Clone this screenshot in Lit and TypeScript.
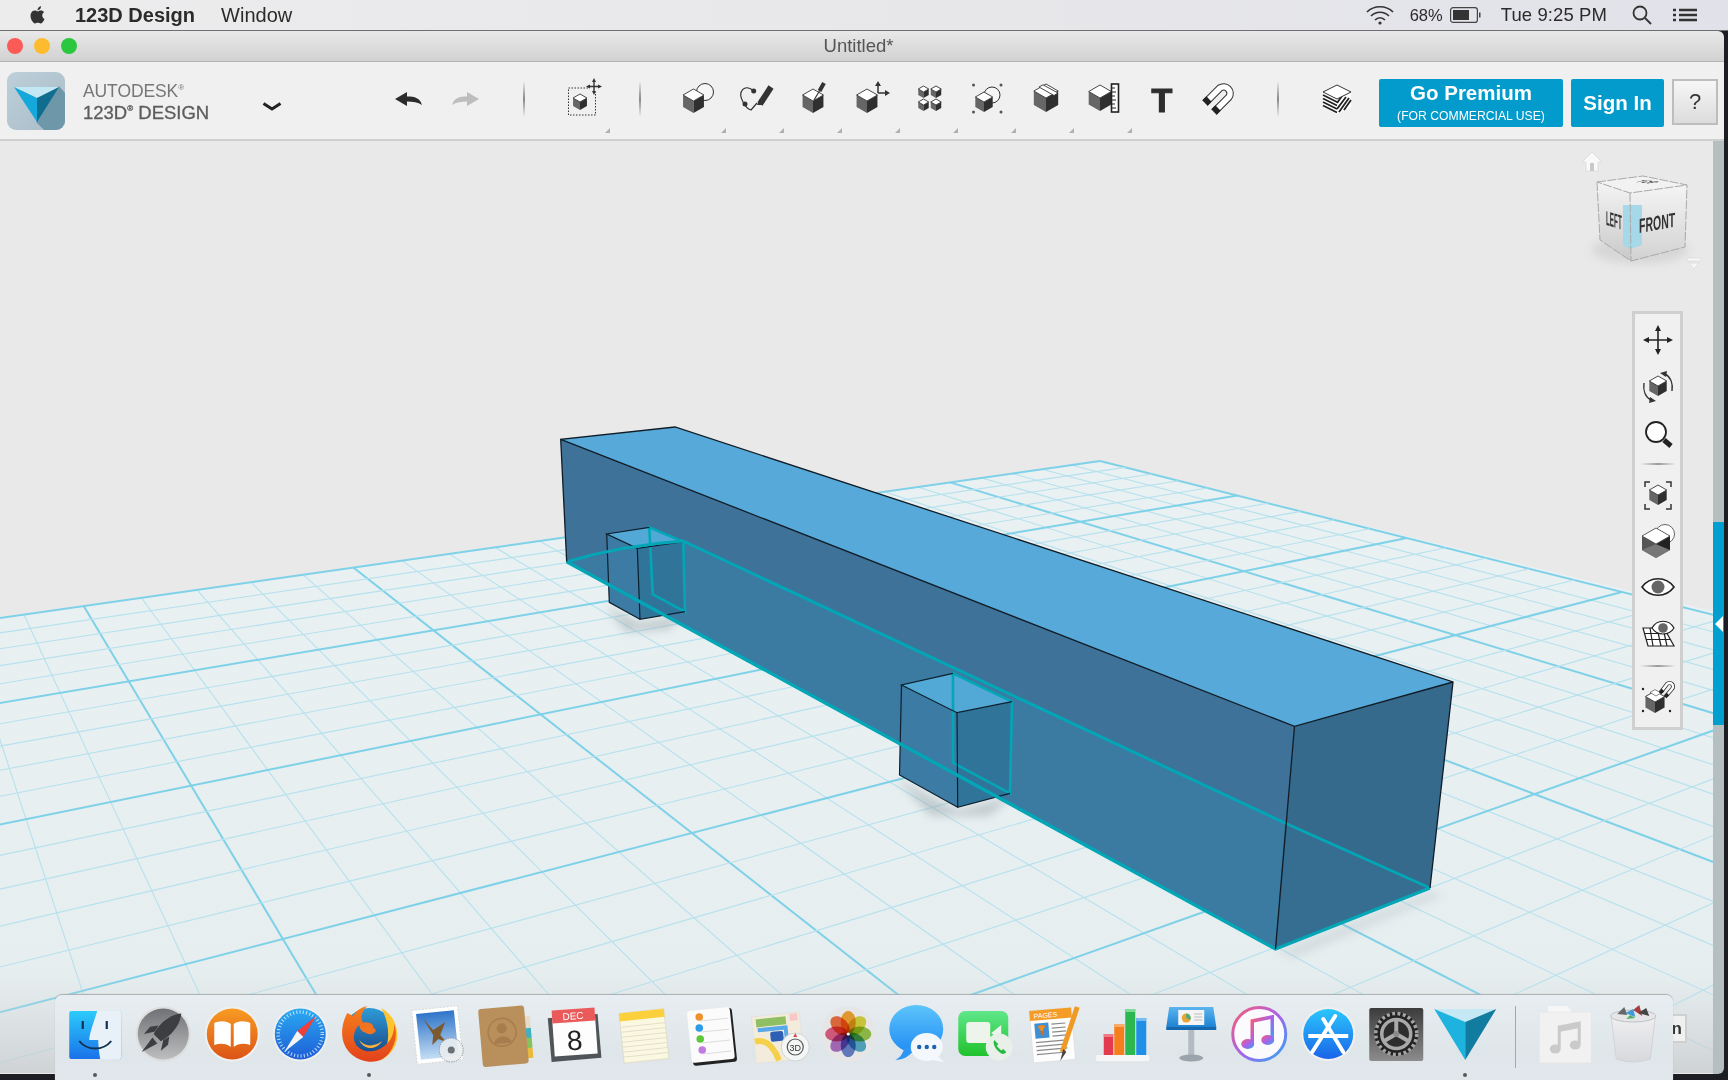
import { LitElement, html, css, svg } from 'lit';
import { customElement } from 'lit/decorators.js';

// isometric cube used all over the toolbars
const cube = (cx: number, cy: number, s: number) => {
  const w = s * 0.87;
  const h = s * 0.5;
  return svg`<g>
    <path d="M${cx - w} ${cy - h}L${cx} ${cy}V${cy + s}L${cx - w} ${cy + h}Z" fill="#666"/>
    <path d="M${cx + w} ${cy - h}L${cx} ${cy}V${cy + s}L${cx + w} ${cy + h}Z" fill="#2f2f2f"/>
    <path d="M${cx} ${cy - s}L${cx + w} ${cy - h}L${cx} ${cy}L${cx - w} ${cy - h}Z" fill="#fff" stroke="#333" stroke-width=".9"/>
  </g>`;
};

const toolIcons = [
  svg`<circle cx="27" cy="14" r="8.5" fill="#f6f6f6" stroke="#333" stroke-width="1"/>${cube(15.5, 23, 12)}`,
  svg`<path d="M17.7 13C9 5 1 13 7 24C9 28 12 31 15 32L21 25" fill="none" stroke="#333" stroke-width="1.2"/>
    <circle cx="17.7" cy="13" r="2.5" fill="#333"/><circle cx="9" cy="26" r="2.5" fill="#333"/>
    <path d="M35 9L24 26" stroke="#333" stroke-width="6"/><path d="M21 27L24 21L27 27Z" fill="#333"/>
    <path d="M34 10L31 15" stroke="#333" stroke-width="4"/>`,
  svg`${cube(19, 23, 12)}<path d="M30 5L25.5 13" stroke="#333" stroke-width="4"/><path d="M25.5 13L20 22" stroke="#333" stroke-width="1.2"/>`,
  svg`${cube(15, 23, 12)}<path d="M26 15V6M26 15H35" stroke="#333" stroke-width="1.5" fill="none"/>
    <path d="M26 3L23 8H29ZM38 15L33 12V18Z" fill="#333"/>`,
  svg`${cube(13.5, 14, 6)}${cube(26, 14, 6)}${cube(13.5, 27, 6)}${cube(26, 27, 6)}`,
  svg`<circle cx="24" cy="17" r="8" fill="#f6f6f6" stroke="#333" stroke-width="1"/>${cube(16, 24, 10)}
    <circle cx="5.5" cy="7" r="1.5" fill="#555"/><circle cx="33" cy="7" r="1.5" fill="#555"/>
    <circle cx="5.5" cy="34" r="1.5" fill="#555"/><circle cx="33" cy="34" r="1.5" fill="#555"/>`,
  svg`${cube(20, 20, 14)}<path d="M13 9L28 17.5L32 15L17 6.8Z" fill="#fff" stroke="#333" stroke-width=".9"/>`,
  svg`${cube(16, 20, 13)}<rect x="27.5" y="6" width="7" height="28" fill="#fff" stroke="#222" stroke-width="1.6"/>
    <path d="M28 10h3M28 14h4M28 18h3M28 22h4M28 26h3M28 30h4" stroke="#222" stroke-width="1"/>`,
];

const magnetIcon = svg`<path d="M5 25L20 10A6.5 6.5 0 0 1 29 19L14 34" fill="none" stroke="#333" stroke-width="7.5"/>
  <path d="M5 25L20 10A6.5 6.5 0 0 1 29 19L14 34" fill="none" stroke="#fff" stroke-width="5.5"/>
  <path d="M5 25L9 21M14 34L18 30" stroke="#222" stroke-width="7.5"/>`;

const layersIcon = svg`<path d="M15 16L1 9V24L15 31Z" fill="#fff"/><path d="M15 16L29 9V24L15 31Z" fill="#fff"/>
  <path d="M1 12L15 19M1 15.5L15 22.5M1 19L15 26M1 22.5L15 29.5" stroke="#222" stroke-width="1.8"/>
  <path d="M15 20L20 13M15 26L24 14M17 29L27 15M22 27L29 17" stroke="#222" stroke-width="1.8"/>
  <path d="M15 2L29 9L15 16L1 9Z" fill="#fff" stroke="#333" stroke-width="1"/>`;

const navIcons = {
  move: svg`<path d="M18 6V30M6 18H30" stroke="#222" stroke-width="1.6"/>
    <path d="M18 3L15 9H21ZM18 33L15 27H21ZM3 18L9 15V21ZM33 18L27 15V21Z" fill="#222"/>`,
  orbit: svg`${cube(18, 17, 10)}<path d="M25 5C31 8 33 15 32 22M11 31C5 28 3 21 4 14" fill="none" stroke="#333" stroke-width="1.4"/>
    <path d="M20 4L27 2L26 8ZM16 32L9 34L10 28Z" fill="#333"/>`,
  zoom: svg`<circle cx="16" cy="16" r="10" fill="#fff" stroke="#222" stroke-width="1.8"/>
    <path d="M24 24L31 30" stroke="#222" stroke-width="5"/>`,
  fit: svg`${cube(18, 18, 10)}<path d="M10 5H5V10M26 5H31V10M10 32H5V27M26 32H31V27" fill="none" stroke="#333" stroke-width="1.5"/>`,
  ghost: svg`<circle cx="25" cy="11" r="9.5" fill="#fff" stroke="#666" stroke-width="1"/>
    <path d="M16 5L30 13V27L16 35L2 27V13Z" fill="#555"/><path d="M16 21L30 27L16 35L2 27Z" fill="#777"/>
    <path d="M16 21V35M16 21L30 13V27Z" fill="#222"/><path d="M16 5L30 13L16 21L2 13Z" fill="#fff" stroke="#444" stroke-width=".8"/>`,
  eye: svg`<path d="M2 18C10 7 26 7 34 18C26 29 10 29 2 18Z" fill="#fff" stroke="#222" stroke-width="1.6"/><circle cx="18" cy="18" r="6.5" fill="#666"/>`,
  gridEye: svg`<path d="M3 13H24L34 31H8Z" fill="#fff" stroke="#222" stroke-width="1.2"/>
    <path d="M4.5 18.5H27M6 24.5H30M10 13L13 31M17 13L21 31M23 13L27 31" stroke="#222" stroke-width="1.2"/>
    <path d="M12 13C17 4 29 4 34 13C29 21 17 21 12 13Z" fill="#fff" stroke="#222" stroke-width="1.2"/><circle cx="23" cy="13" r="4.8" fill="#666"/>`,
  snap: svg`${cube(15, 24, 11)}<path d="M10 14.5L16 18L21 15L15 11.6Z" fill="#fff" stroke="#333" stroke-width=".6"/>
    <path d="M21 14L27 6A3.5 3.5 0 0 1 32 11L26 18" fill="none" stroke="#333" stroke-width="4"/>
    <path d="M21 14L27 6A3.5 3.5 0 0 1 32 11L26 18" fill="none" stroke="#fff" stroke-width="2.4"/>
    <path d="M20 15L23 12M25 19L28 16" stroke="#222" stroke-width="3.6"/>
    <circle cx="3" cy="11" r="1.2" fill="#222"/><circle cx="3" cy="33" r="1.2" fill="#222"/><circle cx="30" cy="33" r="1.2" fill="#222"/>`,
};

const LOGO = {
  top: '#c4e8f3',
  left: '#15a8da',
  right: '#0f6e90',
};

// floor plane of the viewport: u runs along the back edge, v towards the camera
const project = (u: number, v: number) => {
  const w = -0.30772 * u - 0.28683 * v + 1;
  return [(-1042.06 * u + 56.76 * v + 1100) / w, (-41.48 * u - 38.8 * v + 461) / w];
};

const gridLines = () => {
  const lines: { a: number[]; b: number[]; major: boolean }[] = [];
  for (let i = 0; i <= 35; i++) {
    const u = i / 25;
    lines.push({ a: project(u, 0), b: project(u, (0.85 - 0.30772 * u) / 0.28683), major: i % 5 === 0 });
  }
  for (let j = 0; j <= 25; j++) {
    const v = j / 15;
    lines.push({ a: project(0, v), b: project((0.85 - 0.28683 * v) / 0.30772, v), major: j % 5 === 0 });
  }
  return lines;
};

const pts = (p: number[][]) => p.map((q) => q.join(',')).join(' ');

// one small block pushed into the long box
const block = (c: Record<string, number[]>) => svg`
  <polygon points=${pts([c.tl, c.tf, c.bf, c.bl])} fill="#3c7ba3"/>
  <polygon points=${pts([c.tf, c.tr, c.br, c.bf])} fill="#31749a"/>
  <polygon points=${pts([c.tl, c.tb, c.tr, c.tf])} fill="#52a9d6"/>
  <polyline points=${pts([c.tr, c.tb, c.hb, c.br, c.tr])} fill="none" stroke="#03a6b6" stroke-width="2.6"/>
  <polyline points=${pts([c.tb, c.tl, c.tf, c.tr])} fill="none" stroke="#0e1f2c" stroke-width="1.2"/>
  <polyline points=${pts([c.tf, c.bf, c.br])} fill="none" stroke="#0e1f2c" stroke-width="1.2"/>
  <polyline points=${pts([c.tl, c.bl, c.bf])} fill="none" stroke="#0e1f2c" stroke-width="1.2"/>
`;

@customElement('view-scene')
export class ViewScene extends LitElement {
  static styles = css`
    :host { display: block; }
    svg { display: block; }
    text { font-family: "Liberation Sans", Arial, sans-serif; font-weight: 700; fill: #333; }
  `;

  render() {
    return html`<svg width="1713" height="932" viewBox="0 141 1713 932">
      <defs>
        <linearGradient id="floor" x1="0" y1="0" x2="0" y2="1">
          <stop offset="0" stop-color="#e9f1f3"/><stop offset=".8" stop-color="#e6eef0"/><stop offset="1" stop-color="#e2e9eb"/>
        </linearGradient>
        <linearGradient id="fade" x1="0" y1="0" x2="0" y2="1">
          <stop offset="0" stop-color="#d3d6d8" stop-opacity="0"/><stop offset="1" stop-color="#c8cbcd" stop-opacity=".75"/>
        </linearGradient>
        <linearGradient id="vcL" x1="0" y1="0" x2="0" y2="1"><stop offset="0" stop-color="#f4f4f4"/><stop offset="1" stop-color="#c9c9c9"/></linearGradient>
        <linearGradient id="vcR" x1="0" y1="0" x2="0" y2="1"><stop offset="0" stop-color="#f4f4f4"/><stop offset="1" stop-color="#d2d2d2"/></linearGradient>
        <filter id="soft" x="-30%" y="-80%" width="160%" height="260%"><feGaussianBlur stdDeviation="4"/></filter>
      </defs>
      <rect x="0" y="141" width="1713" height="932" fill="#e9e9e9"/>
      <polygon points="1100,461 0,617 0,1073 1713,1073 1713,611" fill="url(#floor)"/>
      ${gridLines().map((l) => svg`<line x1=${l.a[0]} y1=${l.a[1]} x2=${l.b[0]} y2=${l.b[1]}
        stroke=${l.major ? '#7fd1e8' : '#b6e1ed'} stroke-width=${l.major ? 2 : 1.1}/>`)}
      <rect x="0" y="975" width="1713" height="98" fill="url(#fade)"/>

      <polygon points="606,606 640,622 688,614 668,630 625,632" fill="#8a9498" opacity=".38" filter="url(#soft)"/>
      <polygon points="896,778 958,810 1012,796 990,816 930,816" fill="#8a9498" opacity=".38" filter="url(#soft)"/>
      <polygon points="1275,952 1432,890 1442,896 1295,958" fill="#a0aaae" opacity=".25" filter="url(#soft)"/>

      <polygon points="675,427 1453,682 1294.5,726.4 560.7,439.3" fill="#56a9d8"/>
      <polygon points="560.7,439.3 1294.5,726.4 1275.5,949 566.7,561.7" fill="#3e7299"/>
      <polygon points="566.7,561.7 683,541 1285,823 1275.5,949" fill="#3b7ba2"/>
      <polygon points="1294.5,726.4 1453,682 1430,888 1275.5,949" fill="#356a8c"/>
      <polygon points="1285,823 1430,888 1275.5,949" fill="#356e91"/>

      ${block({ tl: [606.7, 534], tb: [649.3, 527.3], tr: [683.3, 541.7], tf: [637.3, 548.3], bl: [609.3, 602.3], bf: [640, 619.3], br: [685, 611.7], hb: [652.7, 594.3] })}
      ${block({ tl: [901.5, 685], tb: [953, 673.3], tr: [1012, 701.7], tf: [957, 712.7], bl: [899.5, 775], bf: [957.7, 807.3], br: [1010, 793.3], hb: [953, 762.7] })}

      <path d="M566.7 561.7Q625 545 683 541L1285 823L1430 888" fill="none" stroke="#03a6b6" stroke-width="3"/>
      <path d="M566.7 561.7L1275.5 949L1430 888" fill="none" stroke="#03a6b6" stroke-width="3.4"/>
      <polyline points="566.7,561.7 560.7,439.3 675,427 1453,682 1430,888" fill="none" stroke="#101c26" stroke-width="1.3"/>
      <polyline points="560.7,439.3 1294.5,726.4 1453,682" fill="none" stroke="#101c26" stroke-width="1.3"/>
      <line x1="1294.5" y1="726.4" x2="1275.5" y2="949" stroke="#101c26" stroke-width="1.3"/>

      <!-- view cube -->
      <ellipse cx="1640" cy="250" rx="48" ry="14" fill="#c4c4c4" opacity=".5" filter="url(#soft)"/>
      <path d="M1582 162L1592 152L1602 162H1598V171H1586V162Z" fill="#f9f9f9" stroke="#dedede" stroke-width="1"/>
      <rect x="1590" y="163" width="4" height="8" fill="#c9c9c9"/>
      <polygon points="1597,182 1600,240 1631,261 1630,193" fill="url(#vcL)"/>
      <polygon points="1630,193 1631,261 1685,247 1687,185" fill="url(#vcR)"/>
      <polygon points="1597,182 1643,176 1687,185 1630,193" fill="#f2f2f2"/>
      <polygon points="1623,205 1642,205 1642,245 1630,249 1623,245" fill="#a5d8e8"/>
      <path d="M1597 182L1643 176L1687 185L1630 193ZM1630 193L1631 261M1597 182L1600 240L1631 261L1685 247L1687 185"
        fill="none" stroke="#a9a9a9" stroke-width="1" stroke-dasharray="9 1.5"/>
      <text transform="matrix(.45,.13,0,1.45,1606,225)" font-size="14">LEFT</text>
      <text transform="matrix(.75,-.13,0,1.45,1639,233)" font-size="14">FRONT</text>
      <text transform="matrix(.62,.06,-.9,.22,1634,182)" font-size="14">TOP</text>
      <path d="M1687 258H1701V261H1687ZM1689 263H1699L1694 269Z" fill="#f7f7f7" stroke="#dcdcdc" stroke-width=".8"/>
    </svg>`;
  }
}

@customElement('nav-panel')
export class NavPanel extends LitElement {
  static styles = css`
    :host { display: flex; flex-direction: column; align-items: center; width: 45px; height: 411px;
      padding-top: 2px; background: #f0f0f0; border: 3px solid #cfcfcf; }
    .item { width: 36px; height: 46px; display: flex; align-items: center; justify-content: center; flex: none; }
    .item.tall { height: 47px; }
    .sep { width: 36px; height: 2px; flex: none; margin: 6px 0 7px;
      background: linear-gradient(90deg, transparent, #999 50%, transparent); }
    .sep.low { margin: 9px 0 6px; }
    svg { display: block; }
  `;

  private icon(body: unknown, cls = '') {
    return html`<div class="item ${cls}"><svg width="36" height="36" viewBox="0 0 36 36">${body}</svg></div>`;
  }

  render() {
    return html`
      ${this.icon(navIcons.move, 'tall')}${this.icon(navIcons.orbit, 'tall')}${this.icon(navIcons.zoom, 'tall')}
      <div class="sep"></div>
      ${this.icon(navIcons.fit)}${this.icon(navIcons.ghost)}${this.icon(navIcons.eye)}${this.icon(navIcons.gridEye)}
      <div class="sep low"></div>
      ${this.icon(navIcons.snap)}
    `;
  }
}

const grad = (id: string, a: string, b: string) => svg`<defs><linearGradient id=${id} x1="0" y1="0" x2="0" y2="1">
  <stop offset="0" stop-color=${a}/><stop offset="1" stop-color=${b}/></linearGradient></defs>`;

const gearSpokes = [0, 120, 240];
const petals = [
  '#f6a01e', '#d8d32a', '#8fc33a', '#46a7c8', '#5a78c8', '#a863c0', '#e0507a', '#f0622c',
];

// dock icons, drawn around the centre of a 68.5x68 cell
const dockIcons = [
  svg`${grad('fd', '#2ccbfb', '#1a72ea')}<rect x="-26" y="-23" width="52" height="48" rx="2" fill="url(#fd)"/>
    <path d="M2 -23C-2 -10 -6 0 -6 6H3C3 12 4 20 5 25H24A2 2 0 0 0 26 23V-21A2 2 0 0 0 24 -23Z" fill="#e8f1f8"/>
    <path d="M-12.5 -13V-5M11.5 -13V-5" stroke="#14324f" stroke-width="2.2"/>
    <path d="M-16 7C-8 17 8 17 16 7" fill="none" stroke="#14324f" stroke-width="2"/>`,
  svg`${grad('lp', '#6f7174', '#bcbec0')}<circle r="27.5" fill="#dedede"/><circle r="25.5" fill="url(#lp)"/>
    <g transform="scale(1.2)"><path d="M15 -17C5 -16 -3 -9 -8 0L-2 6C7 1 14 -7 15 -17Z" fill="#3c3e41"/>
    <path d="M-7 -2L-16 0L-11 -6L-4 -7ZM0 5L-2 14L4 9L5 2Z" fill="#3c3e41"/>
    <path d="M-9 3L-18 15L-5 8Z" fill="#3c3e41"/></g>`,
  svg`${grad('ib', '#f79c22', '#dc5317')}<circle r="27.5" fill="#f0f0f0"/><circle r="25.5" fill="url(#ib)"/>
    <path d="M-1.5 -10C-6 -14 -14 -13 -18 -11V11C-12 9 -6 9 -1.5 13Z M1.5 -10C6 -14 14 -13 18 -11V11C12 9 6 9 1.5 13Z" fill="#fff"/>`,
  svg`${grad('sf', '#2aaaf2', '#1d5dd6')}<circle r="27.5" fill="#efefef"/><circle r="25.5" fill="url(#sf)"/>
    <circle r="22" fill="none" stroke="#dff0ff" stroke-width="3.5" stroke-dasharray="1 2.3" opacity=".85"/>
    <polygon points="16,-18 -3,-3 3,3" fill="#ef3f3c"/><polygon points="-16,18 -3,-3 3,3" fill="#f4f4f4"/>`,
  svg`${grad('ffb', '#2f9bd6', '#163f80')}${grad('ffo', '#f7811c', '#e2421b')}<circle cy="0" r="26" fill="url(#ffb)"/>
    <path d="M12 -26C24 -20 31 -4 27 9C24 18 17 24 10 27C21 14 22 -8 12 -26Z" fill="#fcc42e"/>
    <path d="M-22 -21C-30 -6 -29 11 -17 21C-4 31 15 31 23 14C28 4 27 -4 25 -10C25 2 20 11 8 16C-6 21 -18 11 -15 0C-14 -6 -11 -9 -6 -11C-10 -18 -6 -24 -2 -28C-10 -26 -14 -22 -16 -18C-18 -19 -20 -20 -22 -21Z" fill="url(#ffo)"/>
    <path d="M-10 -10C-2 -14 5 -10 4 -6C8 -5 7 -1 2 0C-2 1 -4 -2 -6 -2C-9 -4 -10 -7 -10 -10Z" fill="#f37420"/>
    <path d="M-10 6C-5 13 5 13 13 7C7 17 -6 16 -10 6Z" fill="#fbb040"/>`,
  svg`${grad('ml', '#2f74c9', '#c4def4')}<g transform="rotate(-6)">
      <rect x="-23" y="-26" width="46" height="54" fill="#fff" stroke="#d8d8d8" stroke-dasharray="2 1.5"/>
      <rect x="-19" y="-22" width="38" height="46" fill="url(#ml)"/></g>
    <path d="M-14 -15L-4 -4L8 -12L3 1L9 8L1 5L-5 11L-4 1Z" fill="#7b5a2e"/>
    <circle cx="14" cy="16" r="12" fill="#e9edf0" opacity=".9" stroke="#8b8f94" stroke-dasharray="1.5 1"/>
    <circle cx="14" cy="16" r="3.5" fill="#6c7075"/>`,
  svg`<g transform="rotate(-5)"><rect x="18" y="-16" width="7" height="12" fill="#e4dcc8"/><rect x="18" y="-4" width="7" height="10" fill="#3fb1c0"/>
      <rect x="18" y="6" width="7" height="10" fill="#84c35a"/><rect x="18" y="16" width="7" height="10" fill="#e9b93e"/>
      <rect x="-26" y="-27" width="46" height="58" rx="3" fill="#b98f5c"/>
      <circle cx="-4" cy="-2" r="14" fill="none" stroke="#a67d4c" stroke-width="1.5"/>
      <circle cx="-4" cy="-6" r="5" fill="#a67d4c"/><path d="M-13 9C-11 0 3 0 5 9Z" fill="#a67d4c"/></g>`,
  svg`<g transform="rotate(-5)"><rect x="-25" y="-18" width="50" height="44" fill="#4e5458"/></g>
    <g transform="rotate(-4)"><rect x="-21" y="-25" width="43" height="46" fill="#fdfdfd"/>
      <path d="M-21 -25H22V-12H-21Z" fill="#ea5a5a"/>
      <text x="0" y="-14.5" text-anchor="middle" font-size="10" fill="#fff" class="cal">DEC</text>
      <text x="0" y="16" text-anchor="middle" font-size="28" fill="#222" class="cal">8</text></g>`,
  svg`<g transform="rotate(-6)"><rect x="-22" y="-23" width="45" height="50" fill="#fbf8e2" stroke="#d9d4b8" stroke-width=".6"/>
      <path d="M-22 -23H23V-15H-22Z" fill="#fbd03c"/>
      <path d="M-22 -9H23M-22 -4H23M-22 1H23M-22 6H23M-22 11H23M-22 16H23M-22 21H23" stroke="#ddd9c4" stroke-width=".8"/></g>`,
  svg`<g transform="rotate(-6)"><rect x="-21" y="-24" width="44" height="54" rx="3" fill="#222"/><rect x="-22" y="-25" width="43" height="52" rx="3" fill="#fbfbfb"/>
      <path d="M-10 -14H18M-10 -3H18M-10 8H18M-10 19H18" stroke="#dcdcdc"/></g>
    <circle cx="-12" cy="-17" r="3.8" fill="#f0902a"/><circle cx="-12" cy="-6" r="3.8" fill="#2c9de8"/>
    <circle cx="-11" cy="5" r="3.8" fill="#5dc83b"/><circle cx="-9" cy="16" r="3.8" fill="#c27ae0"/>`,
  svg`<g transform="rotate(-6)"><rect x="-27" y="-20" width="48" height="47" fill="#f3ecdc" stroke="#ddd" stroke-width=".6"/>
      <rect x="-23" y="-17" width="30" height="8" fill="#8fbf63"/><rect x="11" y="-19" width="8" height="7" fill="#f8c8c8"/>
      <path d="M-22 -6H6V20" fill="none" stroke="#58a7e6" stroke-width="4"/>
      <path d="M-26 5C-14 3 -8 12 -4 26" fill="none" stroke="#f4d148" stroke-width="6"/>
      <rect x="-10" y="-3" width="13" height="10" rx="2" fill="#2d5fb4"/></g>
    <circle cx="15" cy="13" r="14" fill="#f4f6f6" stroke="#c8cccc" stroke-width=".8"/>
    <circle cx="15" cy="13" r="8" fill="none" stroke="#555" stroke-width="1.2"/>
    <text x="15" y="16.5" text-anchor="middle" font-size="9" fill="#333" class="cal">3D</text>
    <path d="M15 -1L13 3H17Z" fill="#d44"/>`,
  svg`<circle r="27.5" fill="#e6e6e6"/>
    ${petals.map((c, i) => svg`<ellipse cx="0" cy="-11.5" rx="7.5" ry="11.5" fill=${c} class="petal" transform="rotate(${i * 45})"/>`)}
    <circle r="1.6" fill="#fff"/>`,
  svg`${grad('ms', '#5ec4fb', '#1f8cf4')}<ellipse cx="-1" cy="-5" rx="27" ry="24" fill="url(#ms)"/>
    <path d="M-12 10C-13 18 -17 24 -22 26C-14 26 -8 22 -4 17Z" fill="#2d96f5"/>
    <ellipse cx="9.5" cy="13" rx="16" ry="14" fill="#f4f8fc"/><path d="M20 22L27 28L15 26Z" fill="#f4f8fc"/>
    <circle cx="2" cy="13" r="2.2" fill="#1d63b0"/><circle cx="9.5" cy="13" r="2.2" fill="#1d63b0"/><circle cx="17" cy="13" r="2.2" fill="#1d63b0"/>`,
  svg`${grad('ft', '#5fe78a', '#20c22d')}<rect x="-27" y="-23" width="50" height="45" rx="7" fill="url(#ft)"/>
    <rect x="-19" y="-12" width="24" height="21" rx="3" fill="#ecf4ec"/><path d="M6 -1L16 -9V7Z" fill="#ecf4ec"/>
    <circle cx="14" cy="13" r="13.5" fill="#e9f0ea"/>
    <path d="M9 6C7 9 10 15 14 18C17 21 20 20 21 18L18 15L16 16.5L11.5 12L13 10Z" fill="#27bb40"/>`,
  svg`<g transform="rotate(-5)"><rect x="-23" y="-25" width="42" height="52" fill="#fdfdfd" stroke="#d8d8d8" stroke-width=".6"/>
      <rect x="-23" y="-25" width="42" height="10" fill="#f49b28"/>
      <text x="-19" y="-17" font-size="7" fill="#fff" class="cal">PAGES</text>
      <rect x="-19" y="-12" width="14" height="15" fill="#3f8fd2"/><path d="M-16 -9L-12 -3L-8 -9L-12 -10Z" fill="#f28a1c"/><path d="M-14 -4L-12 1L-10 -4Z" fill="#d96b12"/>
      <path d="M-2 -10H12M-2 -6H12M-2 -2H12M-2 2H12M-19 7H12M-19 11H12M-19 15H12M-19 19H8" stroke="#8a8a8a" stroke-width="1.2"/></g>
    <path d="M23 -27L8 18" stroke="#ef9a24" stroke-width="5"/><path d="M9 15L6 27L12 18Z" fill="#444"/>`,
  svg`<path d="M-26 21H27V27H-26Z" fill="#f6f6f6"/>
    <rect x="-18.5" y="0" width="9.5" height="21" fill="#e33a4f"/><rect x="-18.5" y="0" width="9.5" height="3" fill="#ee7c86"/>
    <rect x="-8" y="-10" width="10" height="31" fill="#f57f1d"/><rect x="-8" y="-10" width="10" height="3" fill="#f9ac6a"/>
    <rect x="3" y="-25" width="10" height="46" fill="#2cb84f"/><rect x="3" y="-25" width="10" height="3" fill="#7bdc92"/>
    <rect x="14" y="-16" width="10" height="37" fill="#1f8fe8"/><rect x="14" y="-16" width="10" height="3" fill="#78bdf2"/>`,
  svg`${grad('kn', '#5ab4ef', '#1f82d2')}<path d="M-22 -27H22L25 -7H-25Z" fill="url(#kn)"/><rect x="-25" y="-7" width="50" height="3" fill="#1668ae"/>
    <rect x="-13" y="-24" width="26" height="15" fill="#f4f4f4"/><circle cx="-5" cy="-16" r="4.5" fill="#e9a33a"/><path d="M-5 -16V-20.5A4.5 4.5 0 0 1 -1 -14Z" fill="#41b07a"/>
    <path d="M3 -20H11M3 -17H11M3 -14H11" stroke="#bbb"/>
    <path d="M-3 -4H3V23H-3Z" fill="#b3bcc2"/><ellipse cx="0" cy="24" rx="12" ry="3.5" fill="#9aa4aa"/>`,
  svg`<defs><linearGradient id="it" x1="0" y1="0" x2="1" y2="1"><stop offset="0" stop-color="#fb5c74"/><stop offset=".5" stop-color="#a862ea"/><stop offset="1" stop-color="#2fa9f2"/></linearGradient></defs>
    <circle r="26.5" fill="#fbfbfd" stroke="url(#it)" stroke-width="3"/>
    <path d="M-7 9V-13L13 -17V5" fill="none" stroke="url(#it)" stroke-width="3.5"/>
    <ellipse cx="-11.5" cy="10" rx="6.5" ry="5" fill="url(#it)"/><ellipse cx="8.5" cy="6" rx="6.5" ry="5" fill="url(#it)"/>`,
  svg`${grad('as', '#2ac6fd', '#1a64e8')}<circle r="27" fill="#f0f0f0"/><circle r="25" fill="url(#as)"/>
    <path d="M-20 2H20" stroke="#fff" stroke-width="4"/>
    <path d="M-16 18L7 -18" stroke="#fff" stroke-width="4" stroke-linecap="round"/>
    <path d="M-5 -15L15 18" stroke="#fff" stroke-width="4" stroke-linecap="round"/>`,
  svg`${grad('sp', '#3c3c3c', '#8c8c8c')}<rect x="-27" y="-26" width="54" height="53" rx="2" fill="url(#sp)"/>
    <circle r="22" fill="#232323"/><circle r="20.5" fill="none" stroke="#a5a5a5" stroke-width="3.5" stroke-dasharray="3 2.4"/>
    <circle r="14.5" fill="#2d2d2d" stroke="#a8a8a8" stroke-width="3.5"/>
    ${gearSpokes.map((a) => svg`<path d="M0 0V-14" stroke="#aaa" stroke-width="4" transform="rotate(${a})"/>`)}
    <circle r="3" fill="#8a8a8a"/>`,
  svg`<polygon points="-31,-25 31,-25 0,-12" fill="#c5e9f4"/><polygon points="-31,-25 0,-12 0,26" fill="#1eb2de"/>
    <polygon points="31,-25 0,-12 0,26" fill="#117c9f"/>`,
  svg`<path d="M-17 -28H2L7 -22H-17Z" fill="#f6f6f6"/><rect x="-26" y="-22" width="52" height="51" fill="#f1f1f1" stroke="#e4e4e4" stroke-width=".6"/>
    <path d="M-6 14V-7L14 -11V10" fill="none" stroke="#cacaca" stroke-width="3"/><path d="M-6 -7L14 -11V-6L-6 -2Z" fill="#cacaca"/>
    <ellipse cx="-10" cy="15" rx="5.5" ry="4.5" fill="#cacaca"/><ellipse cx="10" cy="11" rx="5.5" ry="4.5" fill="#cacaca"/>`,
  svg`${grad('tr', '#eeeef0', '#d8d9dd')}<path d="M-22 -17L-17 25Q0 31 17 25L22 -17Z" fill="url(#tr)" stroke="#ccced2" stroke-width=".8"/>
    <ellipse cx="0" cy="-18" rx="22.5" ry="6" fill="#e6e6e8" stroke="#bfc1c5"/>
    <path d="M-16 -20L-9 -27L-6 -19Z" fill="#666"/><path d="M-8 -21L0 -25L2 -17Z" fill="#3f9bd8"/><path d="M0 -24L6 -29L9 -18Z" fill="#a53f3f"/>
    <path d="M5 -21L13 -26L16 -18Z" fill="#444"/><path d="M-3 -19L2 -16L-7 -15Z" fill="#52b060"/>`,
];

const DOCK_RUNNING = [0, 4, 20];

@customElement('mac-dock')
export class MacDock extends LitElement {
  static styles = css`
    :host { display: flex; padding: 5px 0 0 5.75px; box-sizing: border-box; border-radius: 7px 7px 0 0;
      background: linear-gradient(180deg, #e7edf0, #dfe6ea 70%, #e2e7ec); box-shadow: 0 -1px 1px #a9adaf; }
    .cell { position: relative; width: 68.5px; height: 68px; flex: none; }
    .cell svg { display: block; overflow: visible; }
    .dot { position: absolute; left: 32.25px; top: 73px; width: 4px; height: 4px; border-radius: 50%; background: #55595c; }
    .sep { flex: none; width: 1px; height: 62px; margin: 6px 14.75px 0 15.75px; background: #a3a8ab; }
    .cal { font-family: "Liberation Sans", Arial, sans-serif; }
    .petal { mix-blend-mode: multiply; opacity: .9; }
  `;

  private cell(body: unknown, running: boolean) {
    return html`<div class="cell"><svg width="68.5" height="68" viewBox="-34.25 -34 68.5 68">${body}</svg>
      ${running ? html`<div class="dot"></div>` : ''}</div>`;
  }

  render() {
    return html`
      ${dockIcons.slice(0, 21).map((b, i) => this.cell(b, DOCK_RUNNING.includes(i)))}
      <div class="sep"></div>
      ${dockIcons.slice(21).map((b) => this.cell(b, false))}
    `;
  }
}

@customElement('app-root')
export class AppRoot extends LitElement {
  static styles = css`
    :host { display: block; position: relative; width: 1728px; height: 1080px; overflow: hidden;
      background: #1d1e23; font-family: "Liberation Sans", Arial, sans-serif; }

    .menubar { height: 30px; display: flex; align-items: center; color: #2b2b2b; font-size: 18px;
      background: linear-gradient(90deg, #ececed, #e7e7ea 60%, #e1e2e9); border-bottom: 1px solid #6e6e72; }
    .apple { margin-left: 28px; width: 20px; height: 22px; }
    .app-name { margin-left: 27px; font-weight: 700; font-size: 20px; }
    .menu-item { margin-left: 26px; font-size: 20px; }
    .status { margin-left: auto; display: flex; align-items: center; padding-right: 31px; font-size: 17px; }
    .wifi { width: 28px; height: 20px; margin-right: 16px; }
    .pct { font-size: 16.5px; margin-right: 7px; }
    .batt { width: 31px; height: 16px; margin-right: 20px; }
    .clock { font-size: 18.5px; margin-right: 25px; letter-spacing: .1px; }
    .mag { width: 20px; height: 20px; margin-right: 21px; }
    .list { width: 24px; height: 14px; }

    .window { width: 1724px; height: 1043px; display: flex; flex-direction: column;
      border-radius: 0 6px 6px 0; overflow: hidden; }
    .titlebar { height: 30px; flex: none; display: flex; align-items: center; position: relative;
      background: linear-gradient(180deg, #e9e9e9, #d1d1d1); }
    .lights { display: flex; gap: 11px; margin-left: 7px; }
    .light { width: 16px; height: 16px; border-radius: 50%; }
    .red { background: #fc5a56; }
    .yellow { background: #fdbb30; }
    .green { background: #2bc83f; }
    .title { position: absolute; left: 0; right: 7px; text-align: center; font-size: 18.5px; color: #555; }

    .toolbar { height: 80px; flex: none; box-sizing: border-box; display: flex; align-items: center;
      padding-left: 7px; background: #f0f0f0; border-top: 1px solid #b5b5b5; border-bottom: 2px solid #cfcfcf; }
    .logo { width: 58px; height: 58px; flex: none; display: block; }
    .brand { width: 130px; margin-left: 18px; margin-top: 4px; flex: none; color: #666; line-height: 1; }
    .brand-top { font-size: 17.5px; font-weight: 400; color: #777; margin-bottom: 4px; letter-spacing: -.1px; }
    .brand-bottom { font-size: 18.5px; color: #5c5c5c; white-space: nowrap; -webkit-text-stroke: .3px #5c5c5c; }
    .brand sup { font-size: 8px; vertical-align: top; line-height: 1.2; }
    .chev { width: 20px; height: 10px; margin-left: 49px; margin-top: 12px; flex: none; }
    .arrow { width: 27px; height: 14px; flex: none; margin-top: -3px; }
    .undo { margin-left: 113px; }
    .redo { margin-left: 30px; }
    .divider { width: 2px; height: 36px; flex: none; margin-top: -3px;
      background: linear-gradient(180deg, transparent, #888 50%, transparent); }
    .d1 { margin-left: 44px; }
    .tools { display: flex; flex: none; margin-left: 28px; }
    .select { margin-left: 28px; }
    .tool { position: relative; width: 58px; height: 77px; flex: none; display: flex; align-items: center;
      justify-content: center; padding-bottom: 5px; box-sizing: border-box; }
    .tool svg { display: block; }
    .tool.more::after { content: ""; position: absolute; right: 1px; bottom: 6px; width: 0; height: 0;
      border-left: 5px solid transparent; border-bottom: 5px solid #b0b0b0; }
    .tool-t { font-size: 34px; font-weight: 700; color: #2e2e2e; line-height: 1; margin-top: 3px;
      -webkit-text-stroke: 1.2px #2e2e2e; }
    .layers { width: 30px; height: 32px; margin-left: 43px; flex: none; margin-top: -3px; }
    .d3 { margin-left: 28px; }
    .btn { height: 48px; background: #029bcb; color: #fff; border-radius: 2px; flex: none; margin-top: 4px;
      display: flex; flex-direction: column; align-items: center; justify-content: center; font-weight: 700; }
    .premium { width: 184px; margin-left: 27px; font-size: 20.5px; line-height: 1; }
    .premium small { font-size: 12.2px; font-weight: 400; margin-top: 6px; }
    .signin { width: 93px; margin-left: 8px; font-size: 20.5px; }
    .help { width: 46px; height: 46px; margin-left: 8px; box-sizing: border-box; flex: none; margin-top: 2px;
      border: 2px solid #bdbdbd; background: linear-gradient(180deg, #f6f6f6, #dcdcdc);
      display: flex; align-items: center; justify-content: center; font-size: 22px; color: #333; }

    .viewport { flex: 1; display: flex; min-height: 0; }
    .canvas { position: relative; width: 1713px; overflow: hidden; background: #e9e9e9; }
    .panel-tab { width: 11px; display: flex; flex-direction: column; background: #b5bfbf; }
    .tab-blue { margin-top: 381px; height: 203px; background: #009fcf; display: flex; align-items: center; }
    .tab-arrow { width: 0; height: 0; margin-left: 2px; border-top: 8px solid transparent;
      border-bottom: 8px solid transparent; border-right: 8px solid #fff; }

    nav-panel { position: absolute; left: 1632px; top: 170px; }
    .peek { position: absolute; left: 1650px; top: 873px; width: 37px; height: 29px; box-sizing: border-box;
      border: 2px solid #cfcfcf; background: #f0f0f0; font-size: 17px; font-weight: 700; color: #333;
      text-align: right; padding-right: 3px; line-height: 25px; }
    mac-dock { position: absolute; left: 55px; top: 995px; width: 1618px; height: 85px; }
  `;

  render() {
    return html`
      <div class="menubar">
        <svg class="apple" viewBox="0 0 24 24"><path fill="#333" d="M17.05 12.54c-.03-2.6 2.12-3.85 2.22-3.91-1.21-1.77-3.09-2.01-3.76-2.04-1.6-.16-3.12.94-3.93.94-.81 0-2.06-.92-3.39-.89-1.74.03-3.35 1.01-4.25 2.57-1.81 3.14-.46 7.8 1.3 10.35.86 1.25 1.89 2.65 3.24 2.6 1.3-.05 1.79-.84 3.36-.84s2.01.84 3.39.81c1.4-.02 2.28-1.27 3.14-2.53.99-1.45 1.4-2.85 1.42-2.93-.03-.01-2.72-1.04-2.74-4.13zM14.47 4.9c.72-.87 1.2-2.08 1.07-3.28-1.03.04-2.28.69-3.02 1.55-.66.77-1.24 2-1.09 3.18 1.15.09 2.32-.58 3.04-1.45z"/></svg>
        <span class="app-name">123D Design</span>
        <span class="menu-item">Window</span>
        <div class="status">
          <svg class="wifi" viewBox="0 0 28 20" fill="none" stroke="#333" stroke-width="1.7">
            <path d="M1 7C8 0 20 0 27 7M5 11C10 6 18 6 23 11M9 15C12 12 16 12 19 15"/><circle cx="14" cy="18" r="1.6" fill="#333" stroke="none"/></svg>
          <span class="pct">68%</span>
          <svg class="batt" viewBox="0 0 31 16"><rect x=".6" y=".6" width="26.8" height="14.8" rx="2.5" fill="none" stroke="#444" stroke-width="1.2"/>
            <rect x="3" y="3" width="16" height="10" fill="#333"/><path d="M29 5.5H30.5V10.5H29Z" fill="#444"/></svg>
          <span class="clock">Tue 9:25 PM</span>
          <svg class="mag" viewBox="0 0 20 20" fill="none" stroke="#333" stroke-width="1.8"><circle cx="8" cy="8" r="6.5"/><path d="M13 13L19 19"/></svg>
          <svg class="list" viewBox="0 0 24 14"><path d="M0 2H3M0 7H3M0 12H3M6 2H24M6 7H24M6 12H24" stroke="#333" stroke-width="2.4"/></svg>
        </div>
      </div>

      <div class="window">
        <div class="titlebar">
          <div class="lights"><span class="light red"></span><span class="light yellow"></span><span class="light green"></span></div>
          <div class="title">Untitled*</div>
        </div>

        <div class="toolbar">
          <svg class="logo" viewBox="0 0 58 58">
            <defs><linearGradient id="lg" x1="0" y1="0" x2="1" y2="1"><stop offset="0" stop-color="#bdd0da"/><stop offset="1" stop-color="#a9bcc7"/></linearGradient></defs>
            <rect width="58" height="58" rx="9" fill="url(#lg)"/>
            <path d="M52 14L29 50L37 58H49A9 9 0 0 0 58 49V21Z" fill="#6f97aa"/>
            <polygon points="7,15 52,15 30,26" fill=${LOGO.top}/>
            <polygon points="7,15 30,26 30,50" fill=${LOGO.left}/>
            <polygon points="52,15 30,26 30,50" fill=${LOGO.right}/>
          </svg>
          <div class="brand">
            <div class="brand-top">AUTODESK<sup>®</sup></div>
            <div class="brand-bottom">123D<sup>®</sup> DESIGN</div>
          </div>
          <svg class="chev" viewBox="0 0 20 10"><path d="M1.5 1.5L10 7L18.5 1.5" fill="none" stroke="#222" stroke-width="3"/></svg>
          <svg class="arrow undo" viewBox="0 0 27 14"><path d="M0 7L12 0V4.5C20 4.5 25 6 27 13C23 10 18 9.5 12 9.5V14Z" fill="#2b2b2b"/></svg>
          <svg class="arrow redo" viewBox="0 0 27 14"><path d="M27 7L15 0V4.5C7 4.5 2 6 0 13C4 10 9 9.5 15 9.5V14Z" fill="#bdbdbd"/></svg>
          <div class="divider d1"></div>

          <div class="tool more select">
            <svg width="40" height="40" viewBox="0 0 40 40">
              <rect x="6.5" y="10" width="27" height="27" fill="none" stroke="#333" stroke-width="1" stroke-dasharray="1.5 1.5"/>
              ${cube(18, 24, 8)}
              <rect x="27" y="3" width="8" height="11" fill="#f0f0f0"/>
              <path d="M32 2V15M26 8.5H38" stroke="#333" stroke-width="1.4"/>
              <path d="M32 0L30 4H34ZM32 17L30 13H34ZM24 8.5L28 6.5V10.5ZM40 8.5L36 6.5V10.5Z" fill="#333"/>
            </svg>
          </div>
          <div class="divider select"></div>

          <div class="tools">
            ${toolIcons.map((i) => html`<div class="tool more"><svg width="40" height="40" viewBox="0 0 40 40">${i}</svg></div>`)}
            <div class="tool"><span class="tool-t">T</span></div>
            <div class="tool"><svg width="40" height="40" viewBox="0 0 40 40">${magnetIcon}</svg></div>
          </div>
          <div class="divider d3"></div>
          <svg class="layers" viewBox="0 0 30 32">${layersIcon}</svg>
          <div class="btn premium">Go Premium<small>(FOR COMMERCIAL USE)</small></div>
          <div class="btn signin">Sign In</div>
          <div class="help">?</div>
        </div>

        <div class="viewport">
          <div class="canvas">
            <view-scene></view-scene>
            <nav-panel></nav-panel>
            <div class="peek">n</div>
          </div>
          <div class="panel-tab"><div class="tab-blue"><div class="tab-arrow"></div></div></div>
        </div>
      </div>

      <mac-dock></mac-dock>
    `;
  }
}
